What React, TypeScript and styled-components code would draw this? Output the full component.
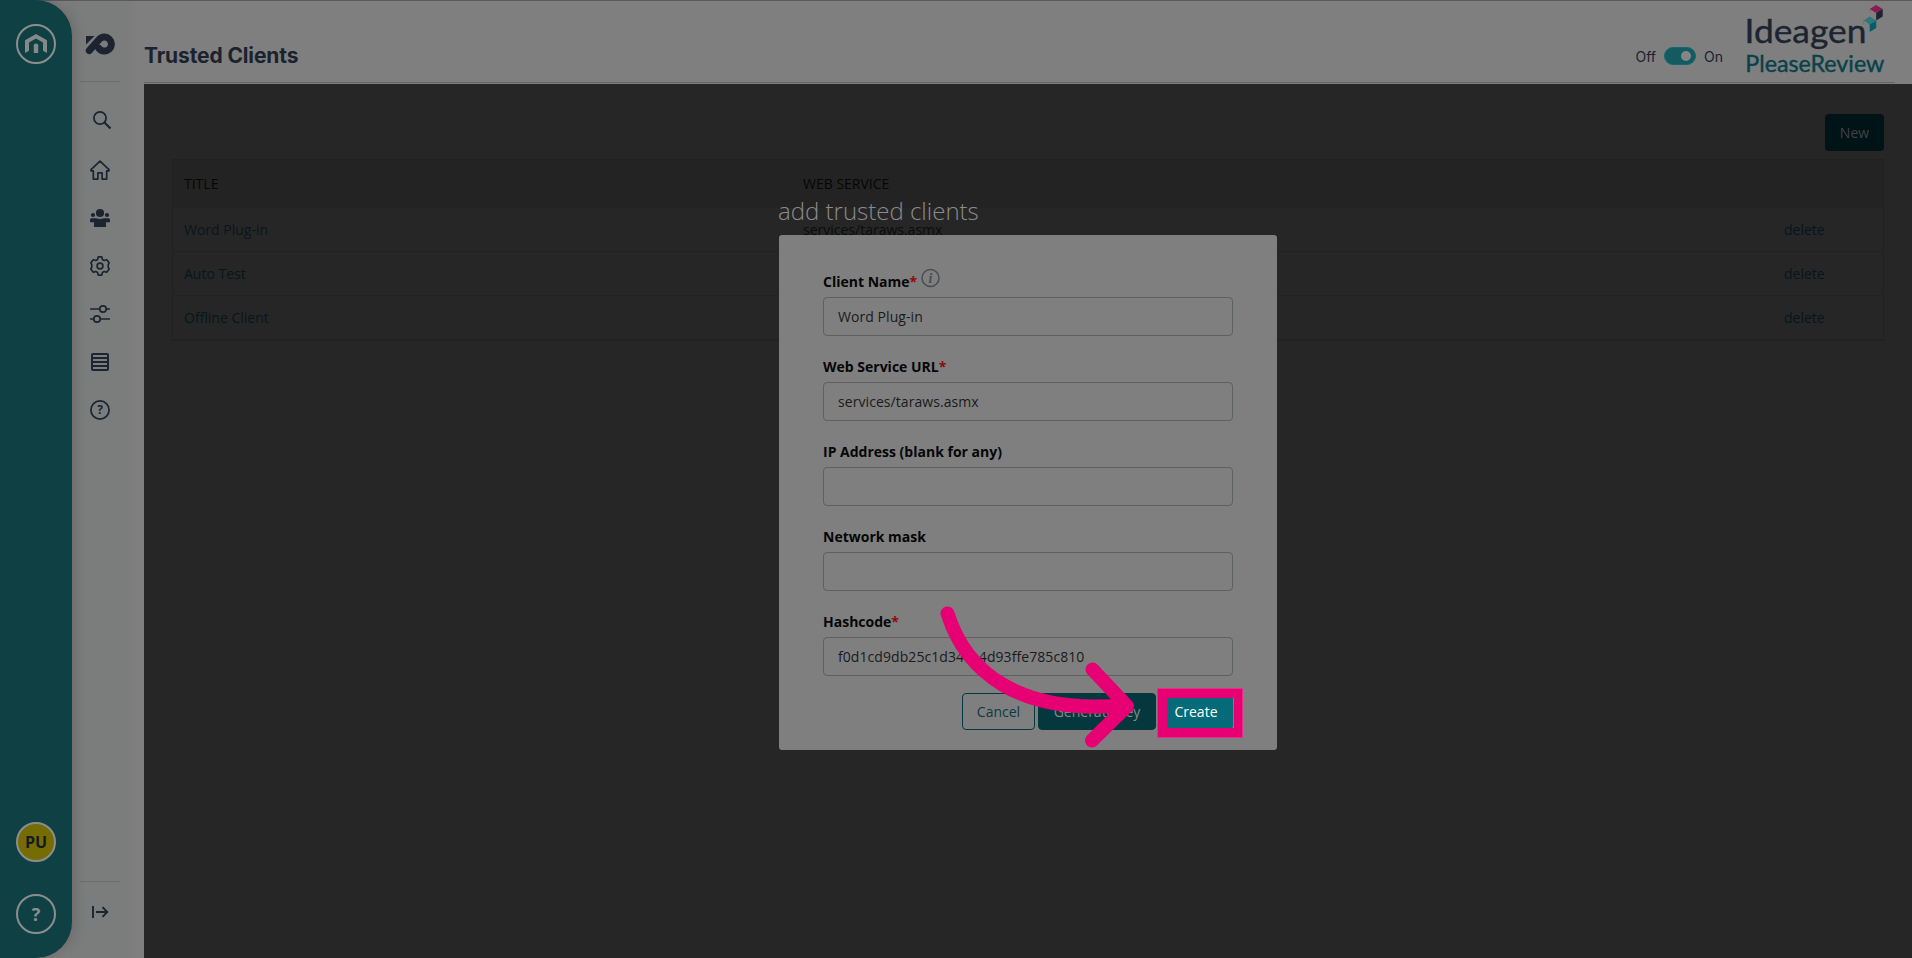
import React from "react";
import styled, { createGlobalStyle } from "styled-components";

const GlobalStyle = createGlobalStyle`
  *, *::before, *::after { box-sizing: border-box; }
  body { margin: 0; background: #7f7f7f; overflow: hidden; }
  body, input, button { font-family: "Open Sans", "Noto Sans", sans-serif; }
`;

const Page = styled.div`
  position: relative;
  display: flex;
  width: 1912px;
  height: 958px;
  overflow: hidden;
  background: linear-gradient(#5a5a5a 1px, #7f7f7f 1px);
`;

const BrandBar = styled.nav`
  z-index: 1;
  flex: none;
  display: flex;
  flex-direction: column;
  align-items: center;
  width: 72px;
  padding: 24px 0;
  gap: 32px;
  background: #0f4144;
  border-radius: 0 36px 36px 0;
  box-shadow: 0 0 14px rgba(60, 40, 45, 0.32);
`;

const Spacer = styled.div`
  flex: 1;
`;

const RoundButton = styled.div<{ $fill?: string; $ink?: string; $size?: number }>`
  display: flex;
  align-items: center;
  justify-content: center;
  width: 40px;
  height: 40px;
  border: 2px solid #8d8d8d;
  border-radius: 50%;
  background: ${(p) => p.$fill ?? "transparent"};
  color: ${(p) => p.$ink ?? "#8d8d8d"};
  font-size: ${(p) => p.$size ?? 16}px;
  font-weight: 700;
  line-height: 1;
`;

const Rail = styled.nav`
  flex: none;
  display: flex;
  flex-direction: column;
  align-items: center;
  width: 56px;
  background: linear-gradient(#5a5a5a 1px, #7a7d7c 1px);
  box-shadow: 0 0 8px rgba(80, 80, 80, 0.14);
`;

const RailLogo = styled.div`
  display: flex;
  align-items: flex-end;
  height: 81px;
  padding-bottom: 26px;
`;

const RailRule = styled.hr`
  width: 40px;
  height: 1px;
  margin: 0;
  border: 0;
  background: #6b6e6e;
`;

const RailList = styled.div`
  display: flex;
  flex-direction: column;
  flex: 1;
  padding-top: 16px;
`;

const RailItem = styled.div`
  display: flex;
  align-items: center;
  justify-content: center;
  width: 40px;
  height: 48px;
`;

const RailFoot = styled(RailItem)`
  height: 76px;
  padding-bottom: 16px;
`;

const Main = styled.main`
  flex: 1;
  display: flex;
  flex-direction: column;
  margin-left: 16px;
`;

const Header = styled.header`
  display: flex;
  height: 84px;
`;

const HeaderInner = styled.div`
  flex: 1;
  display: flex;
  justify-content: space-between;
  height: 83px;
  margin-right: 17px;
  border-bottom: 1px solid #646464;
`;

const Title = styled.h1`
  margin: 0;
  padding-top: 42px;
  font: 700 21px/28px Inter, sans-serif;
  letter-spacing: -0.13px;
  color: #1b222e;
  white-space: nowrap;
`;

const HeaderRight = styled.div`
  display: flex;
  align-items: flex-start;
  padding-right: 10px;
`;

const SwitchRow = styled.div`
  display: flex;
  align-items: center;
  gap: 8px;
  height: 18px;
  margin: 47px 22px 0 0;
  font: 400 14px/18px Inter, sans-serif;
  color: #1b222e;
`;

const SwitchText = styled.span`
  padding-top: 2px;
`;

const Switch = styled.div`
  display: flex;
  align-items: center;
  justify-content: flex-end;
  width: 32px;
  height: 18px;
  padding-right: 4px;
  border: 1px solid #0f6c73;
  border-radius: 9px;
  background: #135b61;
`;

const Knob = styled.div`
  width: 10px;
  height: 10px;
  border-radius: 50%;
  background: #858585;
`;

const Content = styled.section`
  flex: 1;
  display: flex;
  flex-direction: column;
  align-items: flex-end;
  padding: 30px 28px 0;
  background: #262626;
`;

const NewButton = styled.button`
  width: 59px;
  height: 37px;
  padding: 0;
  border: 0;
  border-radius: 4px;
  background: #001317;
  color: #404343;
  font-size: 14px;
`;

const Table = styled.div`
  width: 1712px;
  margin-top: 8px;
  border: 1px solid #212121;
  border-bottom-width: 2px;
  font-size: 14px;
`;

const Row = styled.div<{ $head?: boolean }>`
  display: grid;
  grid-template-columns: 619px 981px 1fr;
  align-items: center;
  height: ${(p) => (p.$head ? 48 : 44)}px;
  padding-left: 11px;
  background: ${(p) => (p.$head ? "#232323" : "#262626")};
  color: ${(p) => (p.$head ? "#060606" : "#0b0c0c")};
  border-bottom: 1px solid #222222;
  &:last-child { height: 43px; border-bottom: 0; }
`;

const Link = styled.span`
  color: #06161a;
`;

const Dialog = styled.div`
  position: absolute;
  left: 778px;
  top: 193px;
  z-index: 2;
  width: 499px;
`;

const DialogTitle = styled.h2`
  margin: 0;
  height: 42px;
  font-size: 24px;
  line-height: 36px;
  font-weight: 300;
  color: #8b8b8b;
`;

const Panel = styled.form`
  display: flex;
  flex-direction: column;
  height: 515px;
  margin-left: 1px;
  padding: 34px 44px 0;
  border-radius: 3px;
  background: #7f7f7f;
`;

const Field = styled.label`
  display: flex;
  flex-direction: column;
  height: 85px;
`;

const Label = styled.span`
  display: flex;
  align-items: center;
  height: 24px;
  margin-bottom: 4px;
  padding-top: 2px;
  font-size: 14px;
  font-weight: 700;
  line-height: 20px;
  color: #060606;
`;

const Required = styled.span`
  color: #8d0a0a;
`;

const InfoIcon = styled.svg`
  margin: -8px 0 0 4px;
`;

const Input = styled.input`
  width: 410px;
  height: 39px;
  padding: 0 14px;
  border: 1px solid #5c6162;
  border-radius: 4px;
  background: transparent;
  color: #1a1a1a;
  font-size: 14px;
  letter-spacing: 0.07px;
  outline: none;
`;

const Actions = styled.div`
  display: flex;
  gap: 3px;
  justify-content: flex-end;
  margin-top: -1px;
`;

const Button = styled.button<{ $w: number; $kind: "outline" | "dim" | "bright" }>`
  width: ${(p) => p.$w}px;
  height: 37px;
  padding: 0;
  font-size: 14px;
  border-radius: 4px;
  border: 1px solid ${(p) => (p.$kind === "bright" ? "#056b78" : "#04383e")};
  background: ${(p) => ({ outline: "transparent", dim: "#04383e", bright: "#056b78" })[p.$kind]};
  color: ${(p) => ({ outline: "#0a3b44", dim: "#858b8b", bright: "#ffffff" })[p.$kind]};
`;

const Highlight = styled.div`
  position: absolute;
  left: 1157px;
  top: 688px;
  z-index: 3;
  width: 86px;
  height: 50px;
  border: solid #e60073;
  border-width: 10px 9px 10px 10px;
  outline: 1px solid rgba(230, 90, 160, 0.5);
  outline-offset: -1px;
`;

const Arrow = styled.svg`
  position: absolute;
  left: 930px;
  top: 600px;
  z-index: 4;
`;

const INK = "#1b2430";

function RailIcon({ name }: { name: string }) {
  return (
    <svg
      width="20" height="20" viewBox={name === "search" ? "0 3 20 20" : "0 0 20 20"}
      overflow="visible" fill="none" stroke={INK} strokeWidth="1.7"
    >
      {name === "search" && (
        <>
          <circle cx="10" cy="9" r="6.1" />
          <path d="M14.2 13.2L20.5 19.4" strokeWidth="2.1" />
        </>
      )}
      {name === "home" && (
        <path
          d="M10 1.2L1 9.6v1.2h2.3v8.3h4.6v-6.3h4.2v6.3h4.6v-8.3H19V9.6z"
          strokeLinejoin="round"
        />
      )}
      {name === "people" && (
        <g fill={INK} stroke="none">
          <circle cx="10" cy="5" r="4.1" />
          <circle cx="3" cy="7" r="2.1" />
          <circle cx="17" cy="7" r="2.1" />
          <path d="M1.5 10.2h4.6q3.9 1.4 7.8 0h4.6q1.5 0 1.5 1.5v2.5h-4V19H4v-4.8H0v-2.5q0-1.5 1.5-1.5z" />
        </g>
      )}
      {name === "gear" && (
        <>
          <circle cx="10" cy="10" r="2.9" />
          <path
            d="M8.2 .9h3.6l.6 2.6 1.7 1 2.6-.8 2.4 3.1-.9 2.1v2.2l.9 2.1-2.4 3.1-2.6-.8-1.7 1-.6 2.6H8.2l-.6-2.6-1.7-1-2.6.8-2.4-3.1.9-2.1V8.9l-.9-2.1 2.4-3.1 2.6.8 1.7-1z"
            strokeLinejoin="round"
          />
        </>
      )}
      {name === "sliders" && (
        <>
          <path d="M0 5h9.7M16.3 5H20M0 15h3.7M10.3 15H20" />
          <circle cx="13" cy="5" r="3.2" />
          <circle cx="7" cy="15" r="3.2" />
        </>
      )}
      {name === "list" && (
        <>
          <rect x="2" y="2" width="16" height="16" rx="1" strokeWidth="2" />
          <path d="M2 6h16M2 10h16M2 14h16" strokeWidth="2" />
        </>
      )}
      {name === "help" && (
        <>
          <circle cx="10" cy="10" r="9.1" />
          <text
            x="10" y="14.3" textAnchor="middle" fill={INK} stroke="none"
            fontSize="12" fontWeight="700" fontFamily="Open Sans"
          >
            ?
          </text>
        </>
      )}
      {name === "expand" && (
        <path d="M3 4v12M6 10h11M12.5 5.2L17.3 10l-4.8 4.8" strokeWidth="1.9" />
      )}
    </svg>
  );
}

const railItems = ["search", "home", "people", "gear", "sliders", "list", "help"];

const clients = [
  { title: "Word Plug-in", service: "services/taraws.asmx" },
  { title: "Auto Test", service: "" },
  { title: "Offline Client", service: "" },
];

const fields = [
  { label: "Client Name", required: true, info: true, value: "Word Plug-in" },
  { label: "Web Service URL", required: true, value: "services/taraws.asmx" },
  { label: "IP Address (blank for any)", value: "" },
  { label: "Network mask", value: "" },
  { label: "Hashcode", required: true, value: "f0d1cd9db25c1d34ce4d93ffe785c810" },
];

function ProductLogo() {
  return (
    <svg width="140" height="80" viewBox="0 0 140 80" fontFamily="Lato, sans-serif">
      <text x="-0.5" y="42.5" fontSize="33.5" fill={INK} stroke={INK} strokeWidth="0.4" textLength="122" lengthAdjust="spacingAndGlyphs">
        Ideagen
      </text>
      <text x="0.3" y="72" fontSize="23.5" fill="#07424a" stroke="#07424a" strokeWidth="0.4" textLength="139" lengthAdjust="spacingAndGlyphs">
        PleaseReview
      </text>
      <g transform="translate(0.7 0)">
        <path d="M124 9l6.5-4 6.5 4-6.5 4z" fill="#8b1c52" />
        <path d="M137 9v7.5l-6.5 4V13z" fill={INK} />
        <path d="M124 9v3" stroke="#8a6577" />
        <path d="M118 20.5l6-4 6.5 4-6.5 4z" fill="#2f777f" />
        <path d="M130.5 20.5V28l-6.5 4v-7.5z" fill="#045d6b" />
        <path d="M118 20.5v4" stroke="#5f7779" />
      </g>
    </svg>
  );
}

export default function App() {
  return (
    <Page>
      <GlobalStyle />
      <BrandBar>
        <RoundButton>
          <svg width="24" height="22" viewBox="0 0 24 22" fill="#858989">
            <path d="M1 20V7.2L12 1l11 6.2V20l-4-2.2V9.4L12 5.6 5 9.4v8.4z" />
            <path d="M9.8 12.2q0-1.7 2.2-1.7t2.2 1.7V20H9.8z" />
          </svg>
        </RoundButton>
        <Spacer />
        <RoundButton $fill="#766c04" $ink="#151b22" $size={16}>PU</RoundButton>
        <RoundButton $size={18}>?</RoundButton>
      </BrandBar>
      <Rail>
        <RailLogo>
          <svg width="30" height="22" viewBox="0 0 30 22">
            <path d="M1 3h8.5L1 11.5z" fill={INK} />
            <path
              d="M4.2 17.6L14.2 6.4A7 7 0 1 1 14 15.5"
              fill="none" stroke={INK} strokeWidth="6.9" strokeLinecap="round" strokeLinejoin="round"
            />
          </svg>
        </RailLogo>
        <RailRule />
        <RailList>
          {railItems.map((name) => (
            <RailItem key={name}>
              <RailIcon name={name} />
            </RailItem>
          ))}
        </RailList>
        <RailRule />
        <RailFoot>
          <RailIcon name="expand" />
        </RailFoot>
      </Rail>
      <Main>
        <Header>
          <HeaderInner>
            <Title>Trusted Clients</Title>
            <HeaderRight>
              <SwitchRow>
                <SwitchText>Off</SwitchText>
                <Switch><Knob /></Switch>
                <SwitchText>On</SwitchText>
              </SwitchRow>
              <ProductLogo />
            </HeaderRight>
          </HeaderInner>
        </Header>
        <Content>
          <NewButton>New</NewButton>
          <Table>
            <Row $head>
              <span>TITLE</span>
              <span>WEB SERVICE</span>
            </Row>
            {clients.map((c) => (
              <Row key={c.title}>
                <Link>{c.title}</Link>
                <span>{c.service}</span>
                <Link>delete</Link>
              </Row>
            ))}
          </Table>
        </Content>
      </Main>

      <Dialog>
        <DialogTitle>add trusted clients</DialogTitle>
        <Panel>
          {fields.map((f) => (
            <Field key={f.label}>
              <Label>
                {f.label}
                {f.required && <Required>*</Required>}
                {f.info && (
                  <InfoIcon width="20" height="20" viewBox="0 0 20 20">
                    <circle cx="9.5" cy="10" r="8.5" fill="none" stroke="#484e52" strokeWidth="1.5" />
                    <text x="9.5" y="14.5" textAnchor="middle" fontSize="14" fontStyle="italic" fontFamily="Liberation Serif" fill="#484e52">
                      i
                    </text>
                  </InfoIcon>
                )}
              </Label>
              <Input defaultValue={f.value} />
            </Field>
          ))}
          <Actions>
            <Button type="button" $w={73} $kind="outline">Cancel</Button>
            <Button type="button" $w={118} $kind="dim">Generate key</Button>
            <Button type="button" $w={74} $kind="bright">Create</Button>
          </Actions>
        </Panel>
      </Dialog>
      <Highlight />
      <Arrow width="220" height="160" viewBox="930 600 220 160" fill="none" stroke="#e60073" strokeWidth="14" strokeLinecap="round" strokeLinejoin="round">
        <path d="M947.5 613.5C966 672 1018 714 1122 705.500" />
        <path d="M1092.500 669.500L1127 706L1092 740.500" />
      </Arrow>
    </Page>
  );
}
